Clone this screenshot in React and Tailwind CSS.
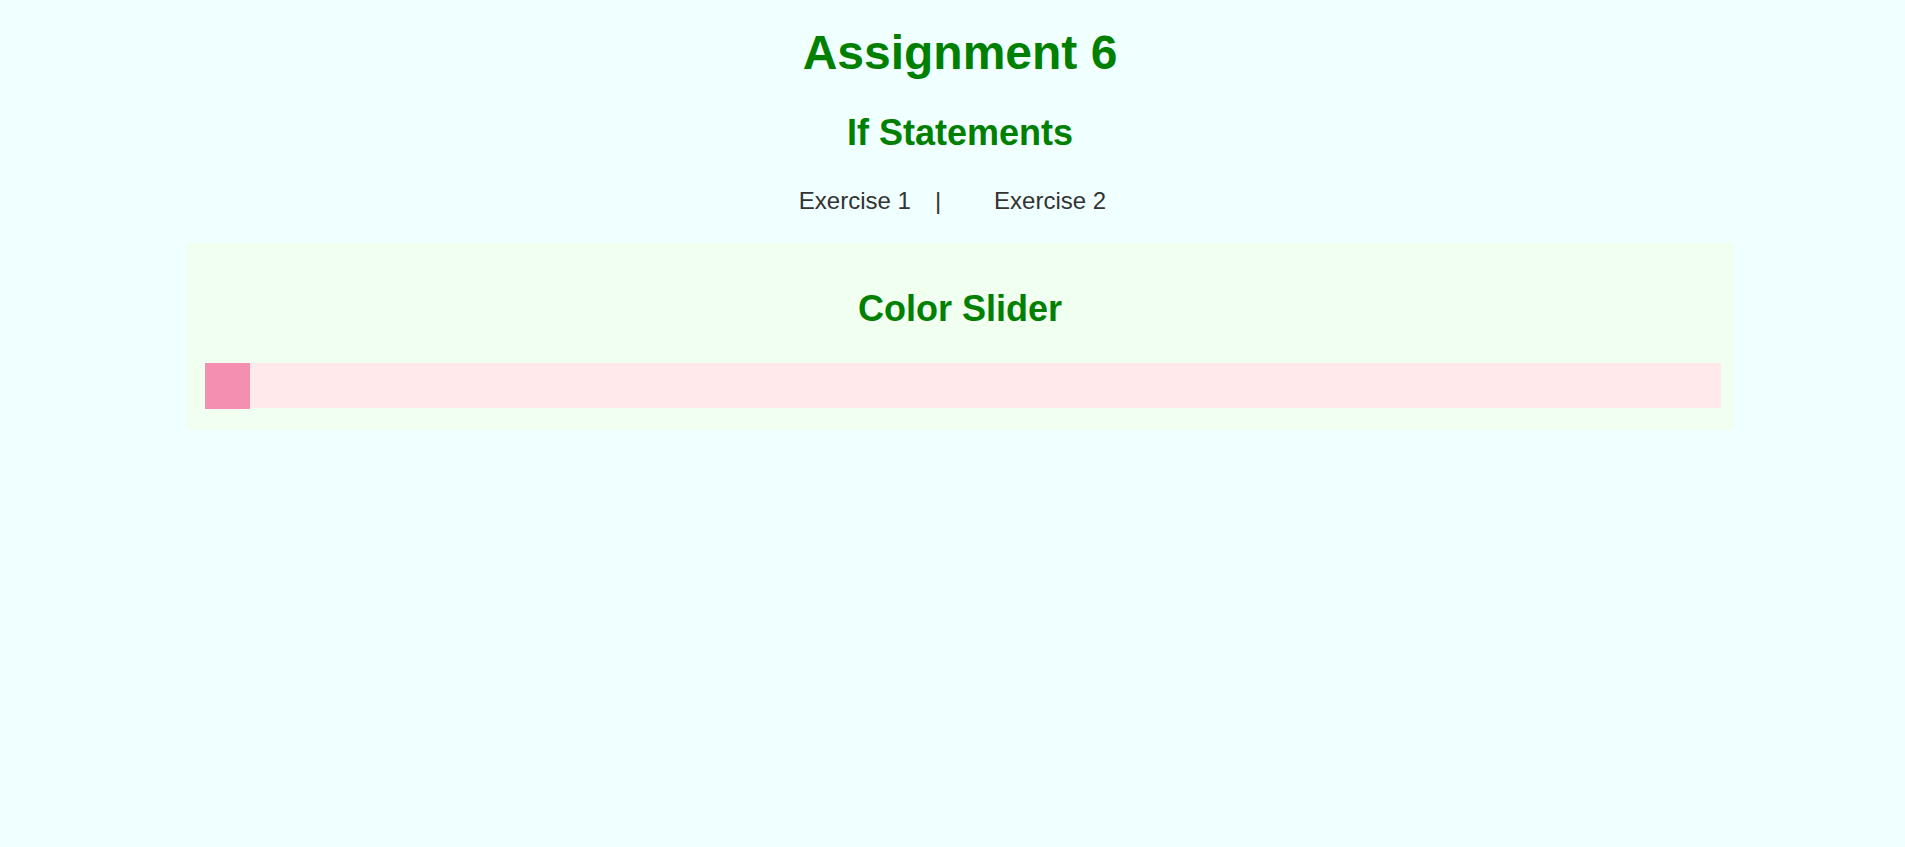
export default function App() {
  return (
    <div
      className="min-h-[847px] w-full bg-[#f0ffff] pl-[15px] pt-[25px]"
      style={{ fontFamily: '"Liberation Sans", Arial, sans-serif' }}
    >
      <h1 className="text-center text-[48px] leading-[56px] font-bold text-[#008000]">
        Assignment 6
      </h1>
      <h2 className="mt-[31px] text-center text-[36px] leading-[42px] font-bold text-[#008000]">
        If Statements
      </h2>
      <nav className="mt-[33px] flex justify-center text-[24px] leading-[28px] text-[#333333] pr-[15px]">
        <a className="cursor-pointer">Exercise 1</a>
        <span className="ml-[24px] mr-[53px]">|</span>
        <a className="cursor-pointer">Exercise 2</a>
      </nav>
      <section className="mx-auto mt-[28px] w-[1546px] bg-[#f0fff0] pt-[45px] pb-[22px]">
        <h2 className="text-center text-[36px] leading-[42px] font-bold text-[#008000]">
          Color Slider
        </h2>
        <div className="ml-[18px] mt-[33px] flex h-[45px] w-[1516px] items-start bg-[#ffe9eb]">
          <div className="h-[46px] w-[45px] bg-[#f48fb1]" />
        </div>
      </section>
    </div>
  );
}
